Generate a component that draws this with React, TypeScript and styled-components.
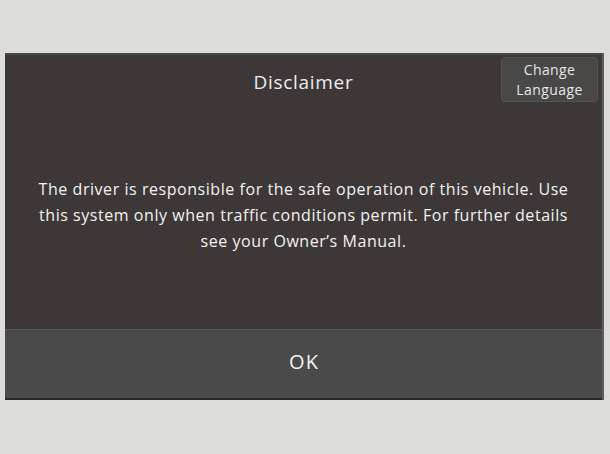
import React from "react";
import styled, { createGlobalStyle } from "styled-components";

const GlobalStyle = createGlobalStyle`
  html, body {
    margin: 0;
    padding: 0;
    background: #dcdddb;
    font-family: "Open Sans", Lato, sans-serif;
  }
`;

const Page = styled.div`
  width: 610px;
  height: 454px;
  padding: 53px 6px 0 5px;
  box-sizing: border-box;
`;

const Panel = styled.div`
  width: 597px;
  height: 347px;
  display: flex;
  flex-direction: column;
  background: #3d3837;
  border-top: 2px solid #4a4747;
  border-bottom: 2px solid #2a2726;
  box-shadow: 2px 0 0 #5c5e5e;
  box-sizing: border-box;
`;

const Header = styled.div`
  position: relative;
  height: 56px;
  display: flex;
  align-items: center;
  justify-content: center;
`;

const Title = styled.div`
  color: #ececec;
  font-size: 19px;
  font-weight: 500;
  letter-spacing: 0.7px;
  margin-top: -3px;
`;

const LangButton = styled.button`
  position: absolute;
  top: 2px;
  right: 4px;
  width: 97px;
  height: 45px;
  background: #4a4747;
  border: 1px solid #555252;
  border-radius: 4px;
  color: #e6e6e6;
  font-family: "Open Sans", Lato, sans-serif;
  font-size: 14px;
  font-weight: 500;
  letter-spacing: 0.4px;
  line-height: 20px;
  padding: 0;
`;

const Body = styled.div`
  flex: 1;
  display: flex;
  align-items: center;
  justify-content: center;
  padding: 0 4px 10px;
`;

const Message = styled.p`
  margin: 0;
  color: #f2f2f2;
  font-size: 16px;
  font-weight: 500;
  letter-spacing: 0.55px;
  line-height: 26px;
  text-align: center;
  white-space: nowrap;
`;

const Footer = styled.button`
  height: 69px;
  background: #4b4a4b;
  border: none;
  border-top: 1px solid #575656;
  color: #f2f2f2;
  font-family: "Open Sans", Lato, sans-serif;
  font-size: 20px;
  font-weight: 500;
  letter-spacing: 1.2px;
  padding: 0 0 5px 1px;
`;

export default function App() {
  return (
    <Page>
      <GlobalStyle />
      <Panel>
        <Header>
          <Title>Disclaimer</Title>
          <LangButton>
            Change
            <br />
            Language
          </LangButton>
        </Header>
        <Body>
          <Message>
            The driver is responsible for the safe operation of this vehicle. Use
            <br />
            this system only when traffic conditions permit. For further details
            <br />
            see your Owner’s Manual.
          </Message>
        </Body>
        <Footer>OK</Footer>
      </Panel>
    </Page>
  );
}
